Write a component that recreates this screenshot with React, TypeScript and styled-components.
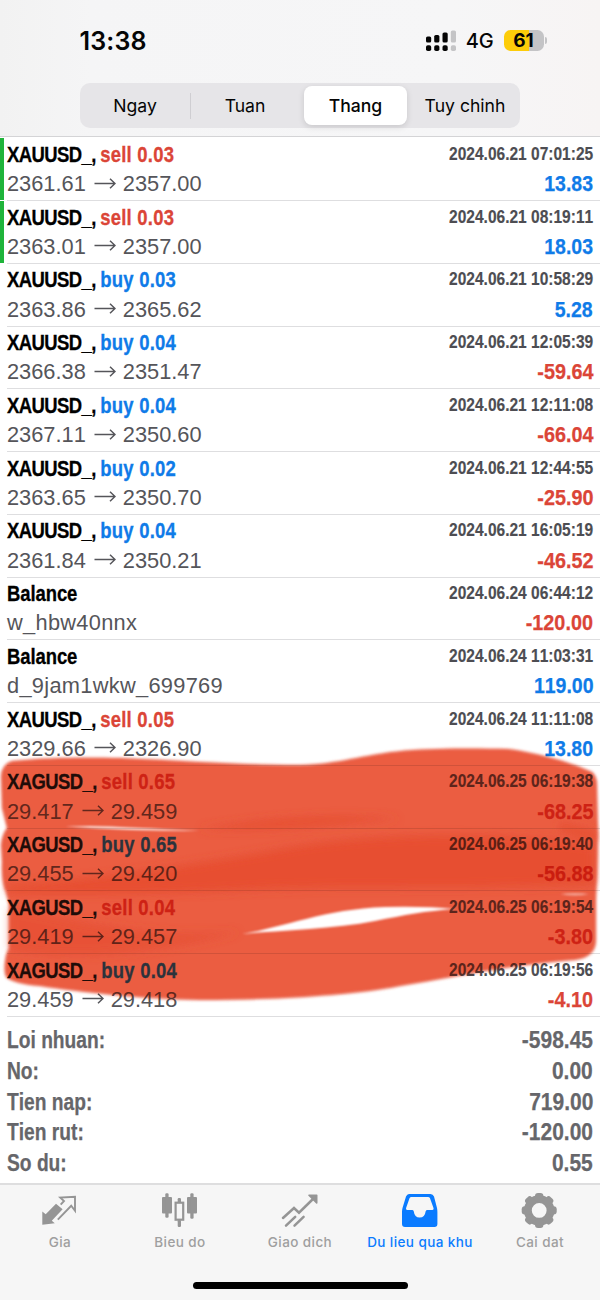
import React from "react";
import styled, { createGlobalStyle } from "styled-components";

const BLUE = "#0f7be8";
const RED = "#db4537";

const GlobalStyle = createGlobalStyle`
  * { box-sizing: border-box; }
  body { margin: 0; background: #fff; }
`;

const Screen = styled.div`
  width: 600px;
  height: 1300px;
  overflow: hidden;
  display: flex;
  flex-direction: column;
  background: #fff;
  font-family: "Liberation Sans", Arial, sans-serif;
  font-kerning: none;
`;

const Header = styled.header`
  height: 137px;
  flex: none;
  display: flex;
  flex-direction: column;
  align-items: center;
  border-bottom: 1px solid #d4d4d6;
  background: linear-gradient(90deg, #f2f2f2 0, #f5f5f6 90px, #f6f6f7 450px, #f7f4f4 600px);
  font-family: Inter, sans-serif;
  font-kerning: normal;
  color: #050505;
`;

const StatusBar = styled.div`
  width: 100%;
  height: 83px;
  padding: 0 53px 2px 79.5px;
  display: flex;
  align-items: center;
`;

const Clock = styled.div`
  flex: 1;
  font-size: 25px;
  font-weight: 600;
  letter-spacing: 0.15px;
`;

const Network = styled.div`
  margin: 1px 10.5px 0 9.5px;
  font-size: 20px;
  font-weight: 500;
  letter-spacing: -0.2px;
`;

const Battery = styled.div`
  width: 40px;
  height: 21px;
  border-radius: 6.5px;
  background: linear-gradient(90deg, #fdcc09 62%, #c4c4c6 62%);
  font-size: 19px;
  line-height: 21px;
  font-weight: 700;
  text-align: center;
  text-indent: -1px;
`;

const BatteryTip = styled.div`
  width: 2px;
  height: 7px;
  margin-left: 1px;
  border-radius: 0 3px 3px 0;
  background: #c4c4c6;
`;

const Segmented = styled.div`
  width: 440px;
  height: 45px;
  border-radius: 10px;
  background: #e6e5e8;
  display: flex;
  align-items: center;
`;

const Segment = styled.div<{ $active?: boolean; $width: number }>`
  flex: none;
  width: ${(p) => p.$width}px;
  height: 39px;
  border-radius: 8px;
  font-size: 17.6px;
  line-height: 39px;
  font-weight: ${(p) => (p.$active ? 550 : 400)};
  text-align: center;
  background: ${(p) => (p.$active ? "#fff" : "transparent")};
  box-shadow: ${(p) => (p.$active ? "0 2px 6px rgba(0,0,0,0.13)" : "none")};
  margin-left: ${(p) => (p.$active ? 5 : 0)}px;
  margin-right: ${(p) => (p.$active ? 3 : 0)}px;
`;

const SegmentDivider = styled.div`
  width: 1px;
  height: 26px;
  background: #cfced2;
`;

const History = styled.main`
  position: relative;
  flex: none;
  padding-top: 1.4px;
`;

const DealRow = styled.div<{ $marked?: boolean }>`
  height: 62.76px;
  padding: 1.3px 7px 0 7px;
  background:
    linear-gradient(#dedee0, #dedee0) 7px 100% / 100% 1px no-repeat,
    linear-gradient(#1fb43a, #1fb43a) 0 0 / ${(p) => (p.$marked ? 4 : 0)}px calc(100% - 1px) no-repeat;
`;

const Line = styled.div`
  height: 29.3px;
  display: flex;
  justify-content: space-between;
  align-items: center;
  white-space: nowrap;
`;

const Symbol = styled.div<{ $plain?: boolean }>`
  font-weight: bold;
  font-size: 22px;
  line-height: 29px;
  letter-spacing: ${(p) => (p.$plain ? -0.1 : -0.7)}px;
  color: #000;
  -webkit-text-stroke: 0.3px currentColor;
  transform: scaleX(0.84);
  transform-origin: left;
`;

const Action = styled.span<{ $side: "buy" | "sell" }>`
  letter-spacing: 0.25px;
  color: ${(p) => (p.$side === "buy" ? BLUE : RED)};
`;

const Stamp = styled.div`
  font-weight: bold;
  font-size: 18px;
  line-height: 29px;
  color: #4d4d52;
  -webkit-text-stroke: 0.15px currentColor;
  transform: scaleX(0.862);
  transform-origin: right;
`;

const Detail = styled.div<{ $comment?: boolean }>`
  display: flex;
  align-items: center;
  font-size: 21.8px;
  line-height: 29px;
  letter-spacing: ${(p) => (p.$comment ? 0.3 : 0)}px;
  color: #55555a;
`;

const Arrow = styled.svg`
  width: 22px;
  height: 14px;
  margin: 0 7px 0 8px;
`;

const Profit = styled.div<{ $negative: boolean }>`
  font-weight: bold;
  font-size: 22.4px;
  line-height: 29px;
  color: ${(p) => (p.$negative ? RED : BLUE)};
  -webkit-text-stroke: 0.25px currentColor;
  transform: scaleX(${(p) => (p.$negative ? 0.885 : 0.87)});
  transform-origin: right;
`;

const Highlighter = styled.svg<{ $tint?: boolean }>`
  position: absolute;
  left: 0;
  top: 603px;
  width: 600px;
  height: 270px;
  mix-blend-mode: ${(p) => (p.$tint ? "normal" : "multiply")};
  opacity: ${(p) => (p.$tint ? 0.13 : 1)};
  pointer-events: none;
`;

const Totals = styled.section`
  flex: 1;
  padding: 8px 7px 0;
`;

const TotalRow = styled.div`
  height: 30.7px;
  display: flex;
  justify-content: space-between;
  align-items: center;
  font-weight: bold;
  font-size: 23px;
  line-height: 30px;
  color: #66666a;
  -webkit-text-stroke: 0.25px currentColor;
`;

const TotalLabel = styled.span`
  transform: scaleX(0.835);
  transform-origin: left;
`;

const TotalValue = styled.span`
  transform: scaleX(0.912);
  transform-origin: right;
`;

const TabBar = styled.footer`
  flex: none;
  height: 117px;
  border-top: 2px solid #dededf;
  background: #f6f6f6;
  display: flex;
  flex-direction: column;
  align-items: center;
`;

const Tabs = styled.nav`
  width: 100%;
  height: 97px;
  display: flex;
`;

const Tab = styled.div<{ $active?: boolean }>`
  width: 120px;
  padding-top: 5px;
  display: flex;
  flex-direction: column;
  align-items: center;
  font: 500 13.5px/18px Inter, sans-serif;
  letter-spacing: 0.42px;
  color: ${(p) => (p.$active ? "#0a7bff" : "#9f9f9f")};
  svg { display: block; width: 40px; height: 40px; margin-bottom: 3px; }
`;

const HomeIndicator = styled.div`
  width: 215px;
  height: 7px;
  border-radius: 4px;
  background: #000;
`;

type Deal = {
  symbol: string;
  side?: "buy" | "sell";
  lots?: string;
  from: string;
  to?: string;
  time: string;
  profit: string;
  marked?: boolean;
};

const deals: Deal[] = [
  { symbol: "XAUUSD_", side: "sell", lots: "0.03", from: "2361.61", to: "2357.00", time: "2024.06.21 07:01:25", profit: "13.83", marked: true },
  { symbol: "XAUUSD_", side: "sell", lots: "0.03", from: "2363.01", to: "2357.00", time: "2024.06.21 08:19:11", profit: "18.03", marked: true },
  { symbol: "XAUUSD_", side: "buy", lots: "0.03", from: "2363.86", to: "2365.62", time: "2024.06.21 10:58:29", profit: "5.28" },
  { symbol: "XAUUSD_", side: "buy", lots: "0.04", from: "2366.38", to: "2351.47", time: "2024.06.21 12:05:39", profit: "-59.64" },
  { symbol: "XAUUSD_", side: "buy", lots: "0.04", from: "2367.11", to: "2350.60", time: "2024.06.21 12:11:08", profit: "-66.04" },
  { symbol: "XAUUSD_", side: "buy", lots: "0.02", from: "2363.65", to: "2350.70", time: "2024.06.21 12:44:55", profit: "-25.90" },
  { symbol: "XAUUSD_", side: "buy", lots: "0.04", from: "2361.84", to: "2350.21", time: "2024.06.21 16:05:19", profit: "-46.52" },
  { symbol: "Balance", from: "w_hbw40nnx", time: "2024.06.24 06:44:12", profit: "-120.00" },
  { symbol: "Balance", from: "d_9jam1wkw_699769", time: "2024.06.24 11:03:31", profit: "119.00" },
  { symbol: "XAUUSD_", side: "sell", lots: "0.05", from: "2329.66", to: "2326.90", time: "2024.06.24 11:11:08", profit: "13.80" },
  { symbol: "XAGUSD_", side: "sell", lots: "0.65", from: "29.417", to: "29.459", time: "2024.06.25 06:19:38", profit: "-68.25" },
  { symbol: "XAGUSD_", side: "buy", lots: "0.65", from: "29.455", to: "29.420", time: "2024.06.25 06:19:40", profit: "-56.88" },
  { symbol: "XAGUSD_", side: "sell", lots: "0.04", from: "29.419", to: "29.457", time: "2024.06.25 06:19:54", profit: "-3.80" },
  { symbol: "XAGUSD_", side: "buy", lots: "0.04", from: "29.459", to: "29.418", time: "2024.06.25 06:19:56", profit: "-4.10" },
];

const totals: [string, string][] = [
  ["Loi nhuan:", "-598.45"],
  ["No:", "0.00"],
  ["Tien nap:", "719.00"],
  ["Tien rut:", "-120.00"],
  ["So du:", "0.55"],
];

const SignalIcon = () => (
  <svg width="30" height="22" viewBox="0 0 30 22">
    {[0, 8.2, 16.5, 24.8].map((x, i) => (
      <g key={x} fill={i === 3 ? "#c4c4c6" : "#050505"}>
        <rect x={x} y={[6.5, 5, 2.5, 0.5][i]} width="5.2" height={[6, 7.5, 10, 12][i]} rx="1.6" />
        <rect x={x} y="15.2" width="5.2" height="5.8" rx="1.8" />
      </g>
    ))}
  </svg>
);

const ArrowIcon = () => (
  <Arrow viewBox="0 0 22 14" fill="none" stroke="#55555a" strokeWidth="1.5">
    <path d="M0.5 6.5H21M16 1.7L21 6.5L16 11.3" />
  </Arrow>
);

const QuotesIcon = () => (
  <svg viewBox="0 0 40 40" fill="none" stroke="#959595" strokeWidth="1.9">
    <path d="M2.3 21.5L5.7 24.2L16 13.8L22.6 19.3L11.8 30.7L14.8 33.3L2.3 34.8Z" fill="#959595" stroke="none" />
    <path d="M17.8 29.7L31.2 15.8L35 20.8V6.8L20.3 7.6L24 11L20.7 14.6" />
  </svg>
);

const ChartIcon = () => (
  <svg viewBox="0 0 40 40" fill="#959595">
    <rect x="2" y="7" width="10" height="16.5" rx="1" />
    <rect x="5.3" y="3.3" width="3.3" height="24.5" rx="1.2" />
    <rect x="27" y="7" width="10" height="16.5" rx="1" />
    <rect x="30.3" y="3.3" width="3.3" height="25.5" rx="1.2" />
    <rect x="17.7" y="8" width="3.3" height="5" rx="1.2" />
    <rect x="17.7" y="30" width="3.3" height="7" rx="1.2" />
    <rect x="15.6" y="12.7" width="7.6" height="17" fill="none" stroke="#959595" strokeWidth="2.2" />
  </svg>
);

const TradeIcon = () => (
  <svg viewBox="0 0 40 40" fill="none" stroke="#959595" strokeWidth="2.5">
    <path d="M3 28L14 18L19 22.7L34 8M6 35.7L15.2 26.8M14.5 35.7L23.6 26.8" strokeLinecap="round" />
    <path d="M29 5.3H36.7V13Z" fill="#959595" strokeWidth="1.6" strokeLinejoin="round" />
  </svg>
);

const HistoryIcon = () => (
  <svg viewBox="0 0 40 40">
    <path
      fill="#0a7bff"
      fillRule="evenodd"
      d="M9 4H30.5Q33 4 34 6.5L37 18Q37.4 20 37.4 22V34Q37.4 37 34.4 37H5Q2 37 2 34V22Q2 20 2.5 18L6 6.5Q7 4 9 4ZM11.5 7Q10 7 9.5 8.3L6 18.3Q5.8 20 7.2 20H12.5Q13.6 20 13.8 21.5Q14.5 27.6 19.7 27.6Q24.9 27.6 25.6 21.5Q25.8 20 27 20H32.5Q33.8 20 33.6 18.3L30 8.3Q29.5 7 28 7Z"
    />
  </svg>
);

const GearIcon = () => (
  <svg viewBox="0 0 40 40">
    <circle cx="19.2" cy="20.4" r="11.3" fill="none" stroke="#959595" strokeWidth="7.8" />
    {[0, 45, 90, 135, 180, 225, 270, 315].map((a) => (
      <rect key={a} x="15" y="2.9" width="8.4" height="9" rx="3" fill="#959595" transform={`rotate(${a} 19.2 20.4)`} />
    ))}
  </svg>
);

const BrushMarks = ({ tint }: { tint?: boolean }) => (
  <Highlighter $tint={tint} viewBox="0 740 600 270">
    <defs>
      <filter id="edge" x="-5%" y="-5%" width="110%" height="110%">
        <feGaussianBlur stdDeviation="1.7" />
      </filter>
      <filter id="slit" x="-5%" y="-30%" width="110%" height="160%">
        <feGaussianBlur stdDeviation="1.1" />
      </filter>
      <filter id="soft" x="-5%" y="-30%" width="110%" height="160%">
        <feGaussianBlur stdDeviation="4" />
      </filter>
    </defs>
    <path
      filter="url(#edge)"
      fill="#eb5d43"
      d="M1 776Q2 764 12 761C50 757 90 757.5 120 758C190 761 240 765 300 765C340 764 360 755 405 750.5C440 748 480 748.5 508 749C540 753 575 764 592 772Q597 776 597 785L598 830L597 875L596 900L596 940Q596 957 575 960C500 966 450 978 400 986C350 996 270 1000 200 1000C140 999 80 992 40 986Q14 984 6 977Q3 970 6 955L9 948L9 905L6 892Q1 882 2 862L1 845Q2 834 7 828L2 808Z"
    />
    <g filter="url(#soft)" fill="#e74f32">
      <path d="M8 885C90 880 180 868 300 846C390 833 500 832 594 846V884C480 890 350 885 240 890C140 894 70 894 8 893Z" />
      <path d="M200 829C260 820 330 813 400 819C340 822 300 831 200 829Z" />
      <path d="M10 908C70 918 140 940 240 932C170 950 80 962 10 950Z" opacity="0.7" />
      <path d="M560 823L596 832V842L560 830Z" />
    </g>
    <path filter="url(#slit)" fill="#fff" d="M242 934C285 927 325 909 385 907Q425 906 455 909C425 911 405 915 375 921C335 929 285 930 242 934Z" />
    <g filter="url(#slit)" fill="#fff">
      <path d="M65 826.5Q100 825 130 827.5Q170 829 200 831Q130 831 65 826.5Z" opacity="0.8" />
      <path d="M560 894Q575 892 589 894Q575 897 560 894Z" opacity="0.45" />
    </g>
  </Highlighter>
);

const tabs = [
  { label: "Gia", Icon: QuotesIcon },
  { label: "Bieu do", Icon: ChartIcon },
  { label: "Giao dich", Icon: TradeIcon },
  { label: "Du lieu qua khu", Icon: HistoryIcon, active: true },
  { label: "Cai dat", Icon: GearIcon },
];

export default function App() {
  return (
    <>
      <GlobalStyle />
      <Screen>
        <Header>
          <StatusBar>
            <Clock>13:38</Clock>
            <SignalIcon />
            <Network>4G</Network>
            <Battery>61</Battery>
            <BatteryTip />
          </StatusBar>
          <Segmented>
            <Segment $width={110}>Ngay</Segment>
            <SegmentDivider />
            <Segment $width={108}>Tuan</Segment>
            <Segment $width={103} $active>Thang</Segment>
            <Segment $width={110}>Tuy chinh</Segment>
          </Segmented>
        </Header>
        <History>
          {deals.map((d, i) => (
            <DealRow key={i} $marked={d.marked}>
              <Line>
                <Symbol $plain={!d.side}>
                  {d.symbol}
                  {d.side && (
                    <>, <Action $side={d.side}>{d.side} {d.lots}</Action></>
                  )}
                </Symbol>
                <Stamp>{d.time}</Stamp>
              </Line>
              <Line>
                <Detail $comment={!d.to}>
                  <span>{d.from}</span>
                  {d.to && (
                    <>
                      <ArrowIcon />
                      <span>{d.to}</span>
                    </>
                  )}
                </Detail>
                <Profit $negative={d.profit.startsWith("-")}>{d.profit}</Profit>
              </Line>
            </DealRow>
          ))}
          <BrushMarks />
          <BrushMarks tint />
        </History>
        <Totals>
          {totals.map(([label, value]) => (
            <TotalRow key={label}>
              <TotalLabel>{label}</TotalLabel>
              <TotalValue>{value}</TotalValue>
            </TotalRow>
          ))}
        </Totals>
        <TabBar>
          <Tabs>
            {tabs.map(({ label, Icon, active }) => (
              <Tab key={label} $active={active}>
                <Icon />
                {label}
              </Tab>
            ))}
          </Tabs>
          <HomeIndicator />
        </TabBar>
      </Screen>
    </>
  );
}
